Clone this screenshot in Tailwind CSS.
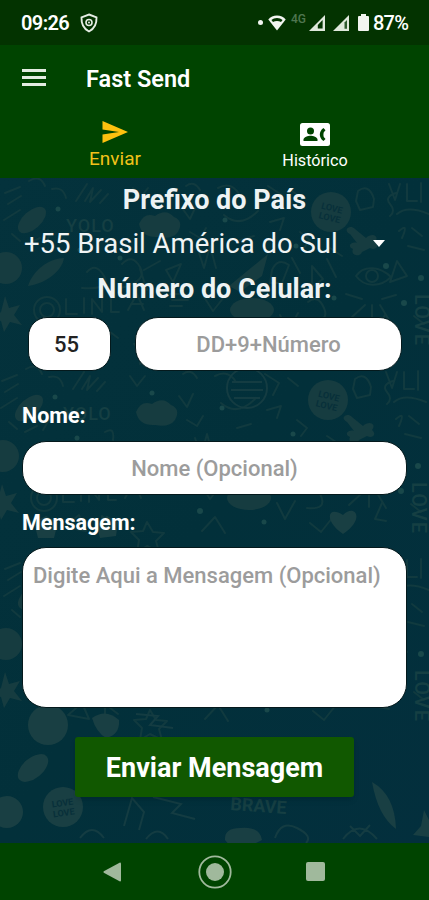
<!DOCTYPE html>
<html lang="pt-BR">
<head>
  <meta charset="UTF-8">
  <meta name="viewport" content="width=device-width, initial-scale=1.0">
  <title>Fast Send</title>

  <!-- Tailwind CSS -->
  <script src="https://cdn.jsdelivr.net/npm/@tailwindcss/browser@4"></script>
</head>
<body class="flex flex-col w-[429px] h-[900px] overflow-hidden bg-[#02303a] font-['Roboto',sans-serif] text-white">

  <!-- Status bar -->
  <div class="flex items-center h-[45px] pl-[21px] pr-5 bg-[#033300] shrink-0">
    <span class="text-[20px] leading-none font-semibold w-[50px] whitespace-nowrap tracking-[-0.6px]">09:26</span>
    <svg class="w-[18px] h-5 ml-[9px]" viewBox="0 0 18 20" fill="none" stroke="#e6eee4" stroke-width="1.9">
      <path d="M9 1.5 16.5 4.3C16.8 10.5 15 15.500 9 18.500 3 15.500 1.200 10.500 1.500 4.300Z" />
      <circle cx="9" cy="9.500" r="3" stroke-width="1.600" />
      <circle cx="9" cy="9.500" r="1" stroke="none" fill="#e6eee4" />
    </svg>
    <div class="flex items-center ml-auto">
      <span class="size-[5px] rounded-full bg-[#f2f5f0]"></span>
      <svg class="w-[18px] h-4 ml-[5px]" viewBox="0 0 18 16">
        <path d="M9 .5C12.500.5 15.700 2 17.700 4.500L9 15.500.3 4.500C2.300 2 5.500.5 9 .5Z" fill="#f2f5f0" />
        <path d="M3.400 5C6.300 2.200 11.700 2.200 14.600 5L13 7C10.800 5.800 7.200 5.800 5 7Z" fill="#033300" />
      </svg>
      <span class="ml-[5px] w-[17px] mb-[7px] text-[12px] leading-none font-medium text-[#4f7650]">4G</span>
      <svg class="w-4 h-4 ml-[1px]" viewBox="0 0 16 16">
        <path d="M16 0V16H0Z" fill="#dfe8dc" />
        <path d="M13.600 5V13.500H8.800V10Z" fill="#033300" />
      </svg>
      <svg class="w-4 h-4 ml-2" viewBox="0 0 16 16">
        <path d="M16 0V16H0Z" fill="#dfe8dc" />
        <path d="M14 5V13.800H11.500V7.500Z" fill="#2e5a2e" />
      </svg>
      <svg class="w-[11px] h-[17px] ml-[9px]" viewBox="0 0 11 17" fill="#f2f5f0">
        <path d="M3 0H8V2H10Q11 2 11 3V16Q11 17 10 17H1Q0 17 0 16V3Q0 2 1 2H3Z" />
      </svg>
      <span class="ml-1 w-[36px] text-[20px] leading-none font-medium whitespace-nowrap tracking-[-0.8px]">87%</span>
    </div>
  </div>

  <!-- App bar and tabs -->
  <header class="h-[133px] bg-[#004400] shrink-0">
    <div class="flex items-center h-[66px] pl-[22px]">
      <svg class="w-6 h-[17px] mb-[2px]" viewBox="0 0 24 17" fill="#e3ece1">
        <path d="M0 0H24V3H0ZM0 7H24V10H0ZM0 14H24V17H0Z" />
      </svg>
      <h1 class="ml-10 mt-[3px] text-[23.5px] leading-none font-semibold">Fast Send</h1>
    </div>
    <nav class="flex h-[67px]">
      <a class="flex flex-col items-center flex-1 pl-[15px] pt-[10px] text-[#f2c21a]">
        <svg class="w-[26px] h-[22px]" viewBox="0 0 26 22" fill="#fdc10f">
          <path d="M.5 0 26 11 .5 22V13.400L17 11 .5 8.600Z" />
        </svg>
        <span class="mt-[6px] text-[19px] leading-5">Enviar</span>
      </a>
      <a class="flex flex-col items-center flex-1 pr-[14px] pt-3">
        <svg class="w-[30px] h-[23px]" viewBox="0 0 30 23">
          <rect width="30" height="23" rx="2.500" fill="#fff" />
          <circle cx="10.500" cy="8" r="3.500" fill="#004400" />
          <path d="M3.500 18V16.500C3.500 14 8 12.700 10.500 12.700S17.500 14 17.500 16.500V18Z" fill="#004400" />
          <path d="M23.500 5 25.500 7.200 23.800 9.200C23.300 10.700 23.300 12.500 23.800 14L25.500 15.900 23.500 18C18.600 14.800 18.600 8.200 23.500 5Z" fill="#004400" />
        </svg>
        <span class="mt-[6px] text-[16.200px] leading-[17px]">Histórico</span>
      </a>
    </nav>
  </header>

  <!-- Form -->
  <main class="relative flex-1 overflow-hidden">

    <!-- Doodle wallpaper -->
    <svg class="absolute inset-0 w-full h-full" viewBox="0 0 429 665" aria-hidden="true">
      <defs>
        <linearGradient id="sea" x1="0" y1="0" x2="1" y2="1">
          <stop offset="0" stop-color="#04323c" />
          <stop offset=".5" stop-color="#02303a" />
          <stop offset="1" stop-color="#032f3d" />
        </linearGradient>
        <g id="doodles" stroke-linecap="round" stroke-linejoin="round">
          <g fill="#163c40">
            <ellipse cx="32" cy="42" rx="17" ry="9" transform="rotate(-42 32 42)" />
            <circle cx="6" cy="90" r="16" />
            <path d="M139 46Q144 34 155 38 166 30 174 39 184 43 178 54 172 62 158 59 142 60 139 46Z" />
            <circle cx="331" cy="34" r="20" />
            <path d="M28 108C32 94 48 80 64 80 62 94 44 106 28 108Z" />
            <path d="M229 108 268 76 262 98 240 114Z" />
            <ellipse cx="252" cy="132" rx="22" ry="12" />
            <path d="M350 56C342 52 350 46 355 51L366 60C372 54 380 58 375 64 380 68 376 73 370 70L362 74C360 80 350 77 353 71 346 68 352 63 357 65Z" />
            <path d="M5 118 9 130 20 127 14 137 22 147 10 144 4 154 1 143-9 141 1 134Z" />
          </g>
          <g fill="none" stroke="#113a3f" stroke-width="2">
            <path d="M5 15 20 9M8 26 21 18M4 42 20 32M76 23 87 6M85 23 93 10 90 24 101 12M100 25 108 16" />
            <path d="M133 10 140 20 148 10M182 30 190 41 196 28M198 72 204 90 210 68 216 90" />
            <circle cx="47" cy="132" r="13" /><circle cx="47" cy="132" r="7" />
            <path d="M66 121V136H77M84 120V135M92 136V121L102 134V119M111 120V134H119M128 132 137 116 144 132M131 126H143" />
            <path d="M356 98C364 86 381 89 391 99 380 110 364 109 356 98Z" /><circle cx="372" cy="98" r="6" />
            <path d="M365 127 352 139M372 127V141M380 127 389 142M362 121 346 116M382 121 396 117" />
            <path d="M356 23 358 13Q369 5 374 21L373 29 360 32ZM390 38Q396 33 390 26T396 15M397 36Q407 27 429 36M389 6 395 22 400 6M407 6V23H417M421 5V24" />
            <path d="M399 53Q409 44 402 60M397 83 390 104 407 98ZM385 137 378 153 389 155" />
            <path d="M272 92Q278 79 289 87L282 105H270ZM292 80 300 95M312 88V109L323 101ZM327 81 336 99" />
            <path d="M166 92 181 86 173 104ZM140 91 147 112M144 92 160 83M204 119 213 133 228 114M280 137 288 153 298 135" />
            <path d="M224 37Q240 51 258 33M218 10Q231 3 239 16M268 8 282 17 276 29M68 161 82 149 89 165ZM105 169V150L118 160" />
            <path d="M122 86Q132 75 140 89T121 110M87 94Q96 84 104 98T82 110M313 157 324 166 336 151M205 165 218 151 228 167" />
            <path d="M150 156 156 166 167 167 159 175 162 186 150 180 140 186 142 174 134 166 146 165ZM29 3Q40-4 45 8M52 11Q63 8 66 20M12 56 20 63M28 66 40 60M46 64 52 54" />
            <path d="M108 66Q118 60 116 74M190 54 200 60 206 50M270 44 284 40 280 52M291 12 301 20M300 54 310 62 304 70M412 50 422 58M408 68 424 72M414 138 424 146" />
            <path d="M170 116H184M172 122H188M170 128H182M240 62 254 58M186 8Q194 2 200 12M308 124Q318 116 324 130T310 142M330 70 342 78" />
          </g>
          <g fill="#19484a">
            <circle cx="58" cy="31" r="2.500" /><circle cx="225" cy="42" r="2.500" /><circle cx="296" cy="68" r="2.500" />
            <circle cx="120" cy="80" r="2.500" /><circle cx="386" cy="88" r="3" /><circle cx="421" cy="100" r="3" />
            <circle cx="155" cy="27" r="2.500" /><circle cx="334" cy="120" r="2.500" /><circle cx="203" cy="145" r="3" />
            <circle cx="267" cy="156" r="2.500" /><circle cx="80" cy="72" r="2.500" /><circle cx="404" cy="125" r="3" />
          </g>
          <g fill="#153f43" font-family="Roboto" font-weight="500">
            <text x="66" y="54" font-size="18" letter-spacing="1">YOLO</text>
            <text x="415" y="116" font-size="20" letter-spacing="1" transform="rotate(90 415 116)">LOVE</text>
          </g>
          <g fill="#08303a" font-family="Roboto" font-weight="700" font-size="9" text-anchor="middle" transform="rotate(14 331 34)">
            <text x="331" y="33">LOVE</text>
            <text x="331" y="43">LOVE</text>
          </g>
        </g>
      </defs>
      <rect width="429" height="665" fill="url(#sea)" />
      <use href="#doodles" />
      <use href="#doodles" x="-3" y="188" />
      <use href="#doodles" x="0" y="376" />
      <g fill="#193f43">
        <path d="M343 356C323 342 328 327 343 337 355 325 366 341 343 356Z" />
        <path d="M34 344 46 338 58 344 54 360 38 360Z" />
        <path d="M96 344 107 338 118 344 116 358 100 360Z" />
        <circle cx="48" cy="547" r="20" />
        <path d="M92 540Q106 530 119 542 120 557 106 560 96 554 92 540Z" />
        <ellipse cx="33" cy="590" rx="18" ry="10" transform="rotate(-40 33 590)" />
        <circle cx="63" cy="629" r="20" />
        <circle cx="7" cy="634" r="16" />
        <path d="M225 662Q224 650 240 650 260 648 262 662L250 668H230Z" />
        <path d="M372 604Q395 617 396 651 378 638 372 604Z" />
        <path d="M424 632 429 642V659L413 657 421 648Z" />
      </g>
      <g fill="none" stroke="#143c42" stroke-width="2">
        <circle cx="247" cy="210" r="20" />
        <path d="M232 204H262M231 212H263M234 220H260" />
        <path d="M136 536 158 538 150 547 173 550M153 619 181 626 172 635 195 641M124 648 132 620 144 634 139 652" />
        <path d="M275 660Q281 642 297 650T306 665M343 661Q359 640 377 661M350 648 360 658 370 647M80 660Q92 644 104 660M146 661Q158 646 168 661" />
      </g>
      <g fill="#08303a" font-family="Roboto" font-weight="700" font-size="9" text-anchor="middle" transform="rotate(-8 63 629)">
        <text x="63" y="628">LOVE</text>
        <text x="63" y="638">LOVE</text>
      </g>
      <text x="230" y="632" font-family="Roboto" font-weight="700" font-size="18" fill="#163f43" transform="rotate(4 230 632)">BRAVE</text>
    </svg>

    <form class="relative flex flex-col px-[22px]">
      <h2 class="mt-[8px] text-center text-[27px] leading-[28px] font-bold text-[#eef3f4]">Prefixo do País</h2>

      <!-- Country prefix -->
      <div class="flex items-center mt-[16px] pl-[2px] h-7">
        <span class="w-[314px] text-[27.500px] leading-7 whitespace-nowrap text-[#f0f4f5]">+55 Brasil América do Sul</span>
        <svg class="w-3 h-[7px] ml-[35px] mb-[2px]" viewBox="0 0 12 7" fill="#fff"><path d="M0 0H12L6 7Z" /></svg>
      </div>

      <h2 class="mt-[17px] text-center text-[27px] leading-[28px] font-bold text-[#eef3f4]">Número do Celular:</h2>

      <div class="flex mt-[14px] pl-[6px] gap-6">
        <input class="w-[83px] h-[54px] pr-[6px] rounded-[19px] bg-white border border-[#04191c] text-center text-[22px] font-medium text-[#222]" value="55">
        <input class="w-[267px] h-[54px] rounded-[23px] bg-white border border-[#04191c] text-center text-[22px] font-medium placeholder:text-[#9c9c9c]" placeholder="DD+9+Número">
      </div>

      <label class="mt-[33px] text-[21.500px] leading-6 font-bold">Nome:</label>
      <input class="mt-[13px] w-[385px] h-[54px] rounded-[24px] bg-white border border-[#04191c] text-center text-[22px] font-medium placeholder:text-[#9c9c9c]" placeholder="Nome (Opcional)">

      <label class="mt-[16px] text-[21.500px] leading-6 font-bold">Mensagem:</label>
      <textarea class="mt-[12px] w-[385px] h-[161px] px-[10px] pt-[15px] rounded-[24px] bg-white border border-[#04191c] resize-none overflow-hidden text-[22px] leading-[26px] font-medium placeholder:text-[#9c9c9c]" placeholder="Digite Aqui a Mensagem (Opcional)"></textarea>

      <button type="button" class="mt-[29px] ml-[53px] w-[279px] h-[60px] pt-[2px] rounded-[3px] bg-[#115800] shadow-md text-[27px] font-bold">Enviar Mensagem</button>
    </form>
  </main>

  <!-- Navigation bar -->
  <footer class="flex items-center h-[57px] pl-[103px] bg-[#004400] shrink-0">
    <svg class="w-[18px] h-5" viewBox="0 0 18 20" fill="#a0b99c"><path d="M17 .5Q18 .5 18 1.500V18.500Q18 19.500 17 19.500L.8 10.700Q0 10 .8 9.300Z" /></svg>
    <svg class="size-[34px] ml-[77px]" viewBox="0 0 34 34">
      <circle cx="17" cy="17" r="15.700" fill="none" stroke="#a0b99c" stroke-width="1.800" />
      <circle cx="17" cy="17" r="9" fill="#a0b99c" />
    </svg>
    <span class="size-[19px] ml-[74px] rounded-[2px] bg-[#a0b99c]"></span>
  </footer>

</body>
</html>
